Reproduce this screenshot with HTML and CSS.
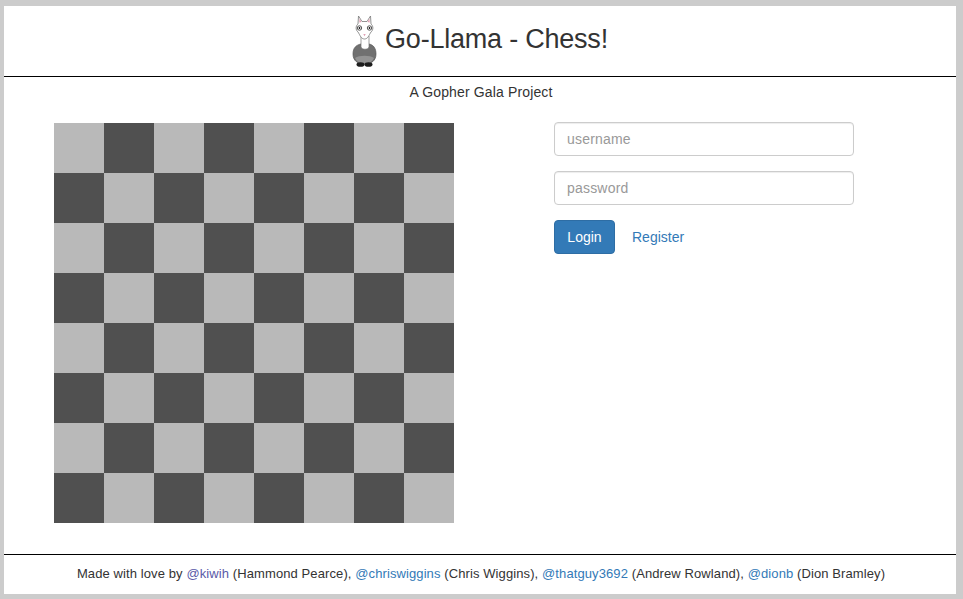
FILE: index.html
```html
<!DOCTYPE html>
<html lang="en">
<head>
<meta charset="utf-8">
<title>Go-Llama - Chess!</title>
<link rel="stylesheet" href="styles.css">
</head>
<body>
<div class="panel">
  <header class="header">
    <svg class="logo" width="25" height="52" viewBox="0 0 25 52" aria-hidden="true">
      <path d="M1 39 C1 33 4 30 9 29 L17 29 C22 30 24 34 24 39 C24 46 19 49 12.500 49 C6 49 1 46 1 39Z" fill="#707070" stroke="#555" stroke-width=".7"/>
      <path d="M3 43 C7 40 18 40 22 43 C20 47 17 49 12.500 49 C8 49 5 47 3 43Z" fill="#939393"/>
      <path d="M9 21 L9 32 C10 35 16 35 17 32 L17 21Z" fill="#fff" stroke="#777" stroke-width=".7"/>
      <path d="M6 9 L6.500 1 L10 6.500 L15 6.500 L18.500 1 L19 9 C21.500 11 21.500 15 19 17 C17 20 16 24 12.500 24 C9 24 8 20 6 17 C3.500 15 3.500 11 6 9Z" fill="#fff" stroke="#777" stroke-width=".8"/>
      <path d="M7.300 7.500 L7.500 3.500 L9.500 7Z M17.700 7.500 L17.500 3.500 L15.500 7Z M11.300 19 L13.700 19 L12.500 21.300Z" fill="#e09fb3"/>
      <circle cx="7.500" cy="13" r="2.200" fill="#fff" stroke="#444" stroke-width=".9"/>
      <circle cx="17.500" cy="13" r="2.200" fill="#fff" stroke="#444" stroke-width=".9"/>
      <circle cx="7.500" cy="13" r=".9" fill="#111"/>
      <circle cx="17.500" cy="13" r=".9" fill="#111"/>
      <ellipse cx="8.500" cy="49.500" rx="4" ry="2.300" fill="#1d1d1d"/>
      <ellipse cx="16.500" cy="49.500" rx="4" ry="2.300" fill="#1d1d1d"/>
    </svg>
    <h1 class="title">Go-Llama - Chess!</h1>
  </header>
  <p class="subtitle">A Gopher Gala Project</p>
  <main class="content">
    <div class="board">
      <i class="l"></i><i class="d"></i><i class="l"></i><i class="d"></i><i class="l"></i><i class="d"></i><i class="l"></i><i class="d"></i>
      <i class="d"></i><i class="l"></i><i class="d"></i><i class="l"></i><i class="d"></i><i class="l"></i><i class="d"></i><i class="l"></i>
      <i class="l"></i><i class="d"></i><i class="l"></i><i class="d"></i><i class="l"></i><i class="d"></i><i class="l"></i><i class="d"></i>
      <i class="d"></i><i class="l"></i><i class="d"></i><i class="l"></i><i class="d"></i><i class="l"></i><i class="d"></i><i class="l"></i>
      <i class="l"></i><i class="d"></i><i class="l"></i><i class="d"></i><i class="l"></i><i class="d"></i><i class="l"></i><i class="d"></i>
      <i class="d"></i><i class="l"></i><i class="d"></i><i class="l"></i><i class="d"></i><i class="l"></i><i class="d"></i><i class="l"></i>
      <i class="l"></i><i class="d"></i><i class="l"></i><i class="d"></i><i class="l"></i><i class="d"></i><i class="l"></i><i class="d"></i>
      <i class="d"></i><i class="l"></i><i class="d"></i><i class="l"></i><i class="d"></i><i class="l"></i><i class="d"></i><i class="l"></i>
    </div>
    <form class="login">
      <input class="field" type="text" placeholder="username">
      <input class="field" type="password" placeholder="password">
      <div class="actions">
        <button class="btn" type="button">Login</button>
        <a class="register" href="#">Register</a>
      </div>
    </form>
  </main>
  <footer class="footer">
    Made with love by <a href="#" class="visited">@kiwih</a> (Hammond Pearce), <a href="#">@chriswiggins</a> (Chris Wiggins), <a href="#">@thatguy3692</a> (Andrew Rowland), <a href="#">@dionb</a> (Dion Bramley)
  </footer>
</div>
</body>
</html>
```
FILE: styles.css
```css
* { box-sizing: border-box; }
html, body { height: 100%; margin: 0; }
body {
  padding: 6px 7px 5px 4px;
  background: #ccc;
  font-family: "Liberation Sans", Arial, sans-serif;
  font-size: 14px;
  line-height: 20px;
  color: #333;
}
a { color: #337ab7; text-decoration: none; }
a.visited { color: #5a5aa8; }
.panel { height: 100%; background: #fff; display: flex; flex-direction: column; }
.header {
  height: 71px;
  border-bottom: 1px solid #000;
  display: flex;
  justify-content: center;
  align-items: flex-start;
  gap: 8px;
  padding: 9px 0 0 0;
}
.logo { display: block; flex: none; }
.title { margin: 4px 0 0; font-size: 27px; letter-spacing: -.22px; font-weight: 400; line-height: 40px; color: #333; }
.subtitle { margin: 5px 0 0; padding-left: 2px; text-align: center; letter-spacing: .14px; }
.content { display: flex; flex: 1; padding: 21px 0 0 50px; gap: 100px; align-items: flex-start; }
.board { display: grid; grid-template-columns: repeat(8, 50px); grid-auto-rows: 50px; flex: none; }
.board i { display: block; }
.l { background: #b9b9b9; }
.d { background: #505050; }
.login { width: 300px; margin-top: -1px; display: flex; flex-direction: column; gap: 15px; }
.field {
  display: block;
  width: 100%;
  height: 34px;
  padding: 6px 12px;
  font: 14px/20px "Liberation Sans", Arial, sans-serif;
  letter-spacing: .2px;
  color: #555;
  background: #fff;
  border: 1px solid #ccc;
  border-radius: 4px;
  box-shadow: inset 0 1px 1px rgba(0,0,0,.075);
}
.field::placeholder { color: #999; opacity: 1; }
.actions { display: flex; align-items: center; gap: 17px; }
.btn {
  height: 34px;
  width: 61px;
  padding: 6px 0;
  font: 14px/20px "Liberation Sans", Arial, sans-serif;
  color: #fff;
  background: #337ab7;
  border: 1px solid #2e6da4;
  border-radius: 4px;
}
.footer {
  height: 40px;
  border-top: 1px solid #000;
  text-align: center;
  font-size: 13px;
  letter-spacing: .1px;
  line-height: 17px;
  padding: 10px 0 0 2px;
  white-space: nowrap;
}
```
